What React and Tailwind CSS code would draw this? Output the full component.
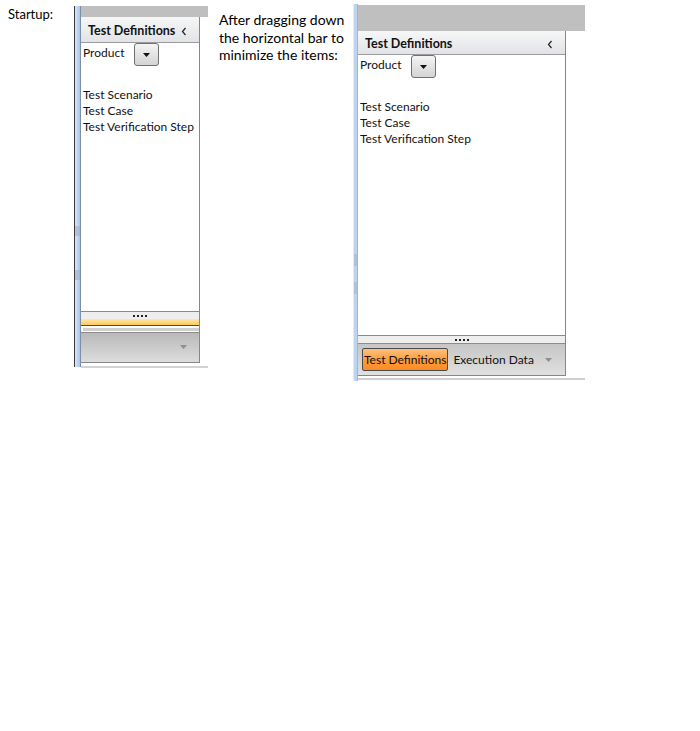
import React from 'react';

const font = "font-['Segoe_UI',Lato,sans-serif]";

function Chevron() {
  return (
    <svg width="6" height="9" viewBox="0 0 6 9">
      <polyline points="4.5,1 1.5,4.5 4.5,8" fill="none" stroke="#222" strokeWidth="1.2" />
    </svg>
  );
}

function DownArrow({ color = '#111' }) {
  return (
    <svg width="7" height="4" viewBox="0 0 7 4">
      <polygon points="0,0 7,0 3.5,4" fill={color} />
    </svg>
  );
}

function Dropdown() {
  return (
    <div className="w-[25px] h-[23px] border border-[#707070] rounded-[3px] bg-gradient-to-b from-[#f4f4f4] to-[#d4d4d4] flex items-center justify-center">
      <DownArrow />
    </div>
  );
}

function Grip() {
  return (
    <div className="flex justify-center gap-[2px]">
      <span className="w-[2px] h-[2px] bg-[#222]" />
      <span className="w-[2px] h-[2px] bg-[#222]" />
      <span className="w-[2px] h-[2px] bg-[#222]" />
      <span className="w-[2px] h-[2px] bg-[#222]" />
    </div>
  );
}

function Items({ top }) {
  return (
    <div className="pl-[2px] text-[12px] leading-[16px] text-[#111]">
      <div className="flex items-start">
        <span className="w-[51px] mt-[2px]">Product</span>
        <Dropdown />
      </div>
      <div className={top}>
        <div>Test Scenario</div>
        <div>Test Case</div>
        <div>Test Verification Step</div>
      </div>
    </div>
  );
}

function Header() {
  return (
    <div className="flex items-center justify-between pt-[3px] pl-[7px] pr-[12px] border-b border-[#9c9c9c] bg-gradient-to-b from-[#f7f7f7] to-[#e1e3e7] text-[12.5px] font-bold h-full text-[#111]">
      <span>Test Definitions</span>
      <Chevron />
    </div>
  );
}

function StartupPanel() {
  return (
    <div className="mt-[6px] flex">
      <div className="flex h-[361px]">
        <div className="w-[1px] bg-[#3a3a3a]" />
        <div className="w-[5px] bg-gradient-to-r from-[#d8e7f8] to-[#a8c5ea] flex flex-col">
          <div className="h-[220px]" />
          <div className="h-[10px] bg-[#9fb0c4] opacity-60" />
          <div className="h-[34px]" />
          <div className="h-[10px] bg-[#9fb0c4] opacity-60" />
        </div>
        <div className="w-[1px] bg-[#7e8ea3]" />
      </div>
      <div className="w-[127px] flex flex-col">
        <div className="h-[11px] bg-[#bfbfbf]" />
        <div className="w-[119px] h-[346px] border-r border-b border-[#878787] flex flex-col bg-white">
          <div className="h-[26px]">
            <Header />
          </div>
          <div className="flex-1">
            <Items top="mt-[21px]" />
          </div>
          <div className="h-[8px] border-t border-[#8a8a8a] bg-[#eeeeee] flex items-center justify-center">
            <Grip />
          </div>
          <div className="h-[7px] bg-gradient-to-b from-[#ffe8a8] to-[#ffc85a] border-b border-[#4d4d4d]" />
          <div className="h-[6px] pt-[2px] pl-[2px]">
            <div className="h-[3px] bg-[#cfcfcf]" />
          </div>
          <div className="h-[30px] border-t border-[#8c8c8c] bg-gradient-to-b from-[#b9b9b9] to-[#dddddd] flex items-center justify-end pr-[12px] pb-[2px]">
            <DownArrow color="#8e8e8e" />
          </div>
        </div>
        <div className="mt-[3px] h-[2px] bg-[#d3d3d3]" />
      </div>
    </div>
  );
}

function MinimizedPanel() {
  return (
    <div className="mt-[4px] flex">
      <div className="flex h-[377px]">
        <div className="w-[1px] bg-[#e2ebf6]" />
        <div className="w-[3px] bg-[#bcd4f0] flex flex-col">
          <div className="h-[250px]" />
          <div className="h-[12px] bg-[#9fb0c4] opacity-50" />
          <div className="h-[16px]" />
          <div className="h-[12px] bg-[#9fb0c4] opacity-50" />
        </div>
        <div className="w-[1px] bg-[#a5b6c9]" />
      </div>
      <div className="w-[227px] pt-[1px] flex flex-col">
        <div className="h-[26px] bg-[#bfbfbf]" />
        <div className="w-[208px] h-[345px] border-r border-b border-[#878787] flex flex-col bg-white">
          <div className="h-[24px]">
            <Header />
          </div>
          <div className="flex-1">
            <Items top="mt-[21px]" />
          </div>
          <div className="h-[8px] border-t border-[#8a8a8a] bg-[#eeeeee] flex items-center justify-center">
            <Grip />
          </div>
          <div className="h-[32px] border-t border-[#8c8c8c] bg-gradient-to-b from-[#c6c6c6] to-[#e0e0e0] flex items-center pl-[4px] pr-[13px] text-[12px] text-[#111]">
            <div className="h-[23px] px-[1px] border border-[#4a4a4a] rounded-[2px] bg-gradient-to-b from-[#ffc07c] via-[#ff9d3e] to-[#ff8c1e] flex items-center">
              Test Definitions
            </div>
            <span className="ml-[5px]">Execution Data</span>
            <div className="ml-auto">
              <DownArrow color="#8e8e8e" />
            </div>
          </div>
        </div>
        <div className="mt-[2px] h-[2px] bg-[#cfcfcf]" />
      </div>
    </div>
  );
}

export default function App() {
  return (
    <div className={`w-[700px] h-[731px] bg-white flex items-start text-black ${font}`}>
      <div className="w-[74px] pl-[8px] pt-[6px] text-[13px] leading-[17px]">Startup:</div>
      <StartupPanel />
      <div className="ml-[11px] mt-[11px] w-[134px] text-[14px] leading-[17.5px]">
        After dragging down the horizontal bar to minimize the items:
      </div>
      <MinimizedPanel />
    </div>
  );
}
